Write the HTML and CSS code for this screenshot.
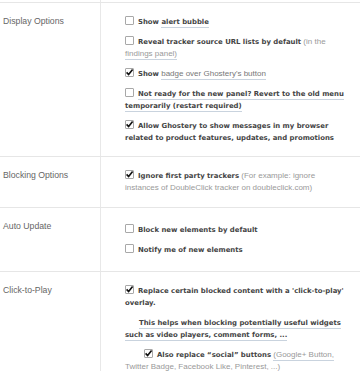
FILE: index.html
```html
<!DOCTYPE html>
<html>
<head>
<meta charset="utf-8">
<link rel="stylesheet" href="styles.css">
</head>
<body>
<div class="opts">
  <div class="row row-top">
    <div class="label"></div>
    <div class="content"></div>
  </div>
  <div class="row row-display">
    <div class="label">Display Options</div>
    <div class="content">
      <p class="item"><span class="cb"></span><b>Show <span class="tip">alert bubble</span></b></p>
      <p class="item"><span class="cb"></span><b>Reveal tracker source URL lists by default</b> <span class="note">(in the <span class="tip">findings panel)</span></span></p>
      <p class="item"><span class="cb checked"><svg viewBox="0 0 9 9" width="9" height="9"><path d="M1.6 4.4 L3.6 6.6 L7.6 1.4" fill="none" stroke="#111" stroke-width="1.6"/></svg></span><b>Show</b> <span class="tip plain">badge over Ghostery's button</span></p>
      <p class="item"><span class="cb"></span><b><span class="tip">Not ready for the new panel? Revert to the old menu temporarily (restart required)</span></b></p>
      <p class="item"><span class="cb checked"><svg viewBox="0 0 9 9" width="9" height="9"><path d="M1.6 4.4 L3.6 6.6 L7.6 1.4" fill="none" stroke="#111" stroke-width="1.6"/></svg></span><b>Allow Ghostery to show messages in my browser related to product features, updates, and promotions</b></p>
    </div>
  </div>
  <div class="row row-blocking">
    <div class="label">Blocking Options</div>
    <div class="content">
      <p class="item"><span class="cb checked"><svg viewBox="0 0 9 9" width="9" height="9"><path d="M1.6 4.4 L3.6 6.6 L7.6 1.4" fill="none" stroke="#111" stroke-width="1.6"/></svg></span><b>Ignore first party trackers</b> <span class="note">(For example: ignore instances of DoubleClick tracker on doubleclick.com)</span></p>
    </div>
  </div>
  <div class="row row-update">
    <div class="label">Auto Update</div>
    <div class="content">
      <p class="item"><span class="cb"></span><b>Block new elements by default</b></p>
      <p class="item"><span class="cb"></span><b>Notify me of new elements</b></p>
    </div>
  </div>
  <div class="row row-play">
    <div class="label">Click-to-Play</div>
    <div class="content">
      <p class="item"><span class="cb checked"><svg viewBox="0 0 9 9" width="9" height="9"><path d="M1.6 4.4 L3.6 6.6 L7.6 1.4" fill="none" stroke="#111" stroke-width="1.6"/></svg></span><b>Replace certain blocked content with a 'click-to-play' overlay.</b></p>
      <p class="item indent"><b><span class="tip">This helps when blocking potentially useful widgets such as video players, comment forms, ...</span></b></p>
      <p class="item indent2"><span class="cb checked"><svg viewBox="0 0 9 9" width="9" height="9"><path d="M1.6 4.4 L3.6 6.6 L7.6 1.4" fill="none" stroke="#111" stroke-width="1.6"/></svg></span><b>Also replace “social” buttons</b> <span class="note tip">(Google+ Button, Twitter Badge, Facebook Like, Pinterest, ...)</span></p>
    </div>
  </div>
</div>
</body>
</html>
```
FILE: styles.css
```css
html, body {
  margin: 0;
  padding: 0;
  background: #ffffff;
}

body {
  font-family: "Liberation Sans", Arial, sans-serif;
  color: #444;
}

.opts {
  width: 360px;
}

.row {
  display: grid;
  grid-template-columns: 100px 1fr;
  border-top: 1px solid #e6e6e6;
}

.row-top {
  border-top: none;
  height: 2px;
}

.label {
  font-size: 8.7px;
  line-height: 12px;
  color: #666;
  padding: 12px 0 0 3px;
}

.content {
  border-left: 1px solid #e8e8e8;
  padding: 13px 10px 0 24px;
}

.row-top .label,
.row-top .content {
  padding: 0;
}

.row-display .content { padding-bottom: 4px; }
.row-blocking .content { padding-bottom: 5px; }
.row-update .content { padding-top: 16px; padding-bottom: 7px; }
.row-play .content { padding-bottom: 0; }

.item {
  margin: 0 0 8px 0;
  font-size: 8px;
  line-height: 12px;
  color: #999;
}

.item b {
  font-family: "DejaVu Sans", Verdana, sans-serif;
  font-weight: bold;
  font-size: 6.9px;
  color: #444;
}

.indent { text-indent: 14px; }
.indent2 { text-indent: 19px; }

.cb {
  display: inline-block;
  width: 9px;
  height: 9px;
  box-sizing: border-box;
  border: 1px solid #a8a8a8;
  border-radius: 1px;
  background: #fff;
  margin-right: 4px;
  vertical-align: -1px;
  position: relative;
  text-indent: 0;
}

.cb svg {
  position: absolute;
  left: -1px;
  top: -1px;
}

.tip {
  border-bottom: 1px solid #c9d3de;
  padding-bottom: 1px;
}

.tip.plain {
  color: #777;
}

.note {
  color: #999;
}
```
